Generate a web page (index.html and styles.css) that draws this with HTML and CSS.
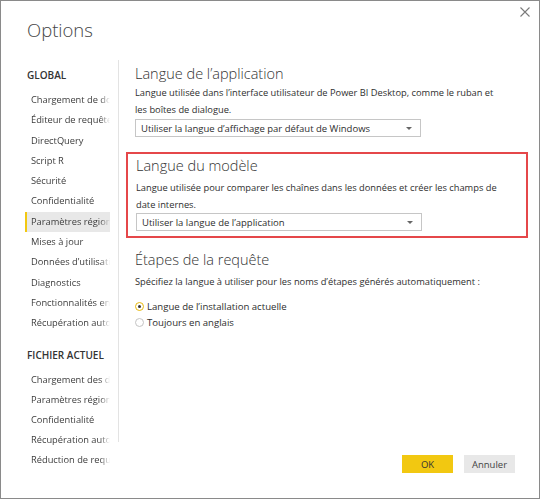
FILE: index.html
```html
<!DOCTYPE html>
<html lang="fr">
<head>
<meta charset="utf-8">
<title>Options</title>
<link rel="stylesheet" href="styles.css">
</head>
<body>
<div class="dialog">
  <header class="top">
    <h1 class="title">Options</h1>
    <button class="close" aria-label="Fermer">
      <svg width="10" height="10" viewBox="0 0 10 10"><path d="M0.5 0.5 L9.5 9.5 M9.5 0.5 L0.5 9.5" stroke="#7a7a7a" stroke-width="1.1" fill="none"/></svg>
    </button>
  </header>
  <div class="body">
    <nav class="side">
      <div class="group-title">GLOBAL</div>
      <ul class="list">
        <li class="item"><span>Chargement de données</span></li>
        <li class="item"><span>Éditeur de requêtes</span></li>
        <li class="item"><span>DirectQuery</span></li>
        <li class="item"><span>Script R</span></li>
        <li class="item"><span>Sécurité</span></li>
        <li class="item"><span>Confidentialité</span></li>
        <li class="item selected"><span>Paramètres régionaux</span></li>
        <li class="item"><span>Mises à jour</span></li>
        <li class="item"><span>Données d’utilisation</span></li>
        <li class="item"><span>Diagnostics</span></li>
        <li class="item"><span>Fonctionnalités en préversion</span></li>
        <li class="item"><span>Récupération automatique</span></li>
      </ul>
      <div class="group-title second">FICHIER ACTUEL</div>
      <ul class="list tight">
        <li class="item"><span>Chargement des données</span></li>
        <li class="item"><span>Paramètres régionaux</span></li>
        <li class="item"><span>Confidentialité</span></li>
        <li class="item"><span>Récupération automatique</span></li>
        <li class="item"><span>Réduction de requête</span></li>
      </ul>
    </nav>
    <main class="main">
      <section class="sect">
        <h2 class="heading">Langue de l’application</h2>
        <p class="desc">Langue utilisée dans l’interface utilisateur de Power BI Desktop, comme le ruban et les boîtes de dialogue.</p>
        <div class="select"><span>Utiliser la langue d’affichage par défaut de Windows</span><i class="arrow"></i></div>
      </section>
      <section class="sect highlight">
        <h2 class="heading">Langue du modèle</h2>
        <p class="desc">Langue utilisée pour comparer les chaînes dans les données et créer les champs de date internes.</p>
        <div class="select"><span>Utiliser la langue de l’application</span><i class="arrow"></i></div>
      </section>
      <section class="sect steps">
        <h2 class="heading">Étapes de la requête</h2>
        <p class="desc">Spécifiez la langue à utiliser pour les noms d’étapes générés automatiquement :</p>
        <div class="radios">
          <label class="radio"><span class="dot on"></span>Langue de l’installation actuelle</label>
          <label class="radio"><span class="dot"></span>Toujours en anglais</label>
        </div>
      </section>
    </main>
  </div>
  <footer class="actions">
    <button class="btn primary">OK</button>
    <button class="btn">Annuler</button>
  </footer>
</div>
</body>
</html>
```

FILE: styles.css
```css
* { box-sizing: border-box; }
html, body { margin: 0; padding: 0; background: #fff; }
body { font-family: "Open Sans", "Noto Sans", sans-serif; color: #333; }

.dialog {
  width: 540px;
  height: 499px;
  border: 1px solid #8a8a8a;
  display: flex;
  flex-direction: column;
  background: #fff;
}

.top {
  height: 59px;
  display: flex;
  justify-content: space-between;
  align-items: flex-start;
  padding: 0 9px 0 26px;
}
.title {
  margin: 16px 0 0 0;
  font-size: 18.5px;
  line-height: 26px;
  font-weight: 300;
  color: #444;
}
.close {
  margin-top: 6px;
  width: 10px;
  height: 10px;
  padding: 0;
  border: 0;
  background: none;
  display: block;
}
.close svg { display: block; }

.body {
  height: 382px;
  display: flex;
}

.side {
  width: 118px;
  padding: 5px 0 0 24px;
  border-right: 1px solid #e3e3e3;
  flex: none;
}
.group-title {
  font-size: 10px;
  font-weight: 600;
  line-height: 20px;
  color: #333;
  padding-left: 2px;
  margin-bottom: 5px;
  white-space: nowrap;
}
.group-title.second { margin-top: 11px; }
.list { list-style: none; margin: 0; padding: 0; }
.item {
  width: 85px;
  height: 20.3px;
  line-height: 20px;
  font-size: 9.3px;
  color: #3c3c3c;
  padding-left: 6px;
}
.tight .item { height: 20px; }
.item span {
  display: block;
  overflow: hidden;
  white-space: nowrap;
  -webkit-mask-image: linear-gradient(to right, #000 calc(100% - 10px), transparent);
  mask-image: linear-gradient(to right, #000 calc(100% - 10px), transparent);
}
.item.selected {
  background: #e8e8e8;
  box-shadow: inset 2px 0 0 #f2c811;
}

.main {
  flex: 1;
  padding: 3px 11px 0 16px;
}
.sect { margin: 0; }
.heading {
  margin: 0;
  font-size: 14.5px;
  line-height: 22px;
  font-weight: 300;
  color: #333;
}
.desc {
  margin: 0 0 1px 0;
  max-width: 366px;
  font-size: 9.3px;
  line-height: 16.5px;
  color: #2e2e2e;
}
.select {
  width: 286px;
  height: 18px;
  border: 1px solid #c6c6c6;
  display: flex;
  align-items: center;
  justify-content: space-between;
  padding: 0 8px 0 5px;
  font-size: 9.5px;
  color: #2e2e2e;
}
.arrow {
  width: 0;
  height: 0;
  border-left: 3px solid transparent;
  border-right: 3px solid transparent;
  border-top: 3px solid #666;
}

.highlight {
  margin: 15px 0 0 -9px;
  border: 2px solid #e5474a;
  padding: 1px 8px 5px 8px;
}
.highlight .desc { margin: 3px 0 0 0; }

.steps { margin-top: 11px; }
.steps .desc { margin-top: 2.5px; }
.radios { margin-top: 8px; display: flex; flex-direction: column; }
.radio {
  display: flex;
  align-items: center;
  height: 16.6px;
  font-size: 9.6px;
  color: #2e2e2e;
}
.dot {
  width: 9px;
  height: 9px;
  border-radius: 50%;
  border: 1px solid #c4c4c4;
  margin: 0 3px 0 0;
  display: flex;
  align-items: center;
  justify-content: center;
}
.dot.on { border-color: #e8b90c; }
.dot.on::after {
  content: "";
  width: 3px;
  height: 3px;
  border-radius: 50%;
  background: #333;
}

.actions {
  flex: 1;
  display: flex;
  justify-content: flex-end;
  align-items: flex-start;
  gap: 11px;
  padding: 13px 24px 0 0;
}
.btn {
  width: 51px;
  height: 18px;
  border: 0;
  padding: 0;
  background: #e8e8e8;
  font-family: "Open Sans", "Noto Sans", sans-serif;
  font-size: 9.5px;
  color: #444;
}
.btn.primary { background: #f2c811; color: #333; }
```
